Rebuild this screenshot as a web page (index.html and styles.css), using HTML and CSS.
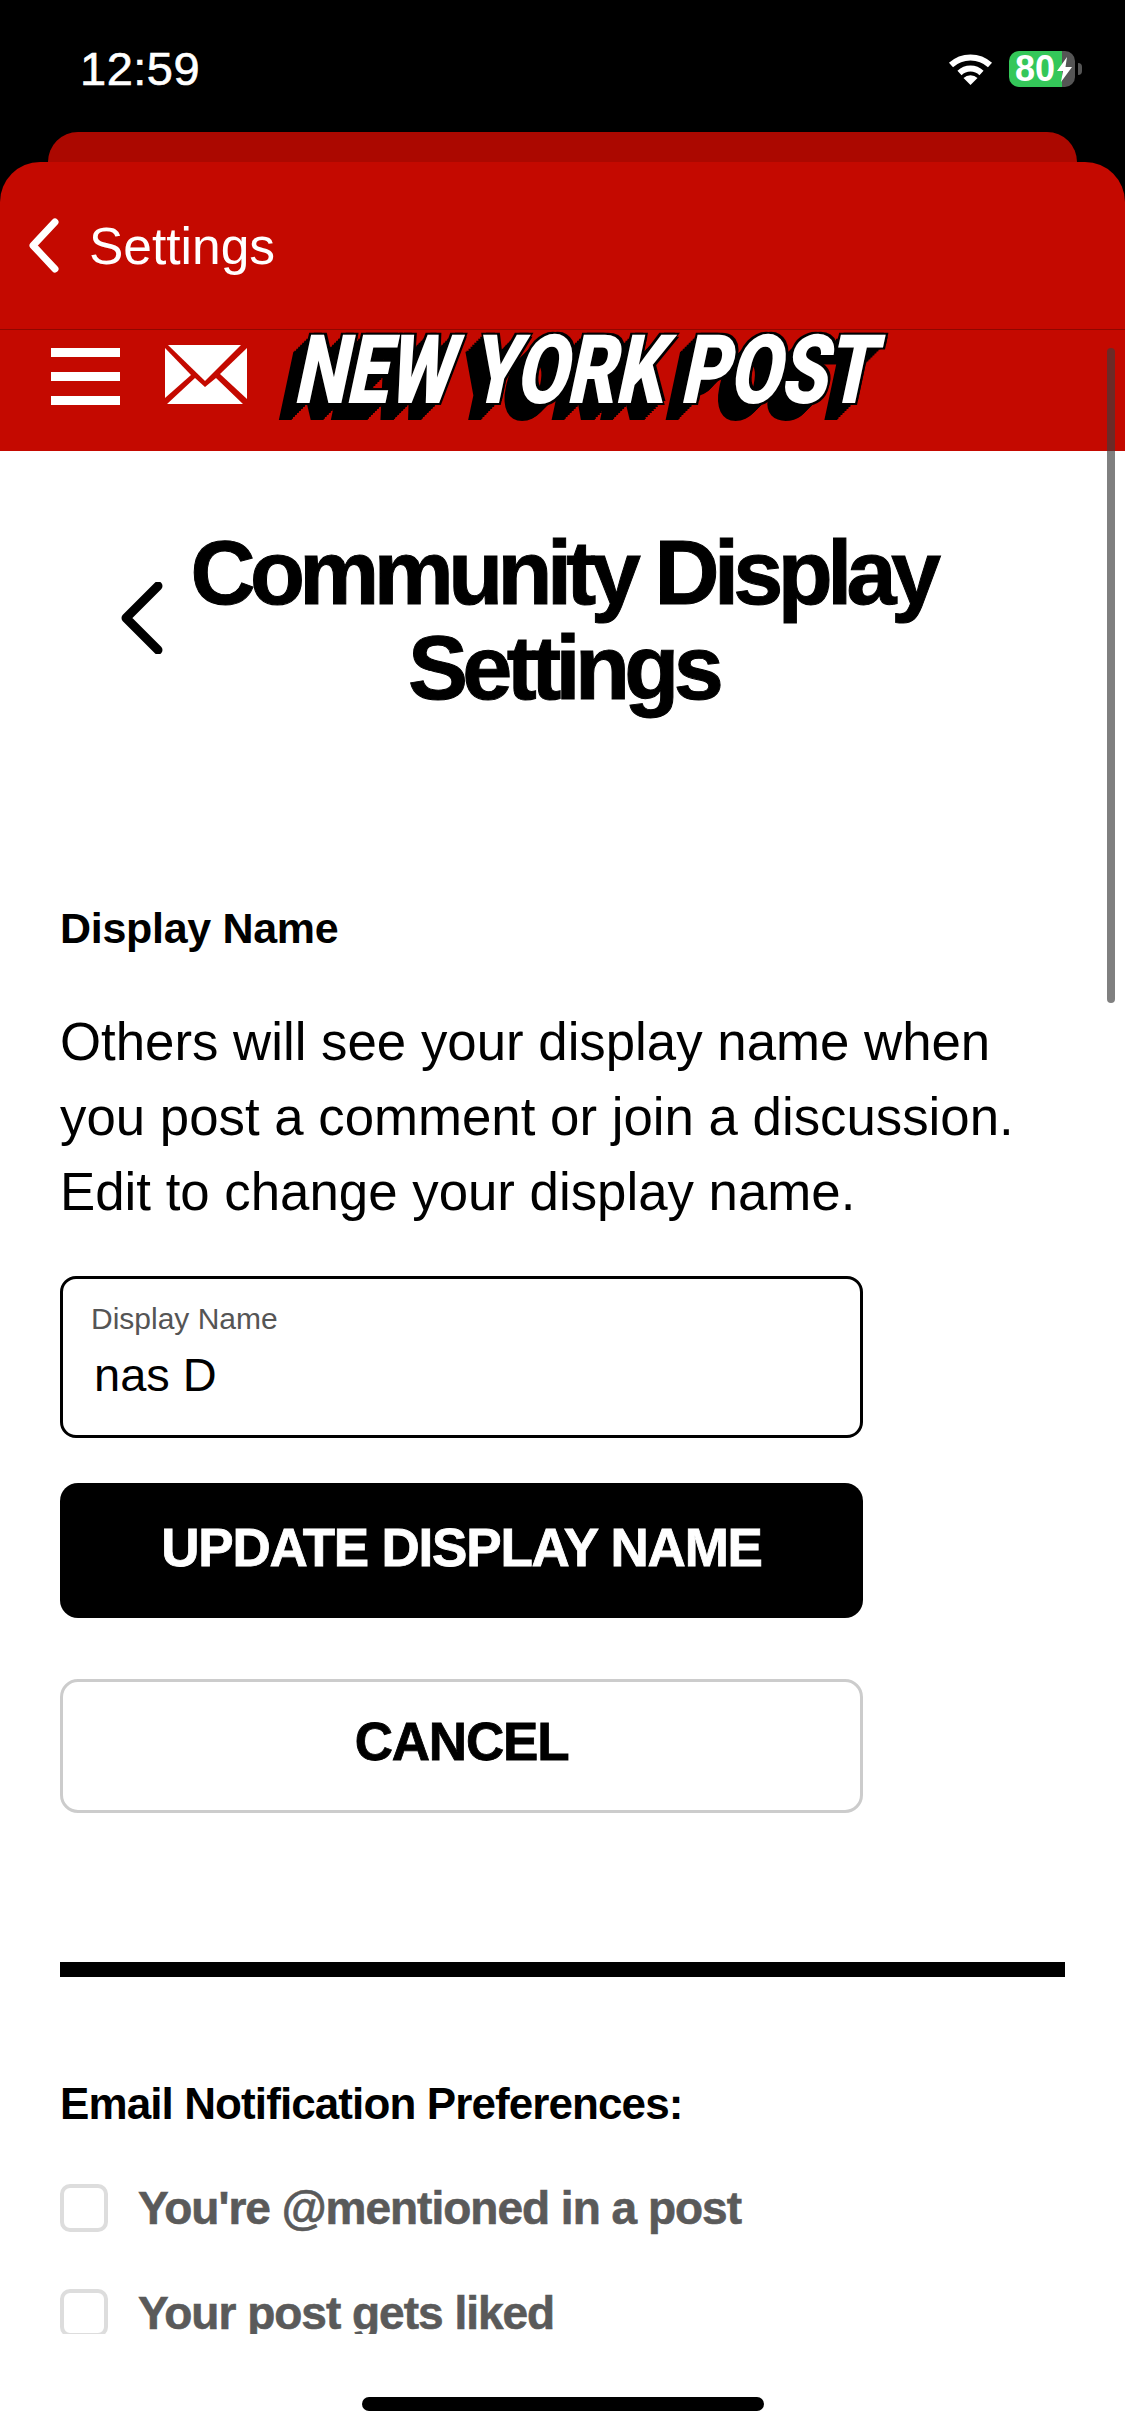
FILE: index.html
```html
<!DOCTYPE html>
<html lang="en">
<head>
    <meta charset="UTF-8">
    <meta name="viewport" content="width=device-width, initial-scale=1.0">
    <title>Community Display Settings</title>
    <link rel="stylesheet" href="styles.css">
</head>
<body>
    <div class="phone">
        <div class="status-bar">
            <span class="clock">12:59</span>
            <div class="status-icons">
                <svg class="wifi" viewBox="0 0 45 32">
                    <path d="M3 12 A29 29 0 0 1 42 12" fill="none" stroke="#fff" stroke-width="6"/>
                    <path d="M11.5 20 A16 16 0 0 1 33.5 20" fill="none" stroke="#fff" stroke-width="6"/>
                    <path d="M22.5 32 L15.5 25 A10 10 0 0 1 29.5 25 Z" fill="#fff"/>
                </svg>
                <div class="battery">
                    <span class="battery-level">80</span>
                    <svg class="bolt" viewBox="0 0 15 25">
                        <path d="M10 0 L0 14 H6 L4 25 L15 10 H8.5 Z" fill="#fff"/>
                    </svg>
                </div>
                <div class="battery-nub"></div>
            </div>
        </div>
        <div class="card-behind"></div>
        <div class="sheet">
            <div class="sheet-nav">
                <svg class="sheet-back" viewBox="0 0 32 55">
                    <path d="M27 4 L5 27.5 L27 51" fill="none" stroke="#fff" stroke-width="7" stroke-linecap="round" stroke-linejoin="round"/>
                </svg>
                <span>Settings</span>
            </div>
            <header class="site-header">
                <svg class="hamburger" viewBox="0 0 69 57">
                    <rect width="69" height="9" fill="#fff"/>
                    <rect y="24" width="69" height="9" fill="#fff"/>
                    <rect y="48" width="69" height="9" fill="#fff"/>
                </svg>
                <svg class="mail" viewBox="0 0 82 59">
                    <polygon points="3,0 76,0 40,36" fill="#fff"/>
                    <polygon points="0,3 26,30 0,53" fill="#fff"/>
                    <polygon points="82,3 55,29 82,54" fill="#fff"/>
                    <polygon points="30,33 40,42 51,33 78,59 2,59" fill="#fff"/>
                </svg>
                <div class="logo"><span>NEW YORK POST</span></div>
            </header>
            <main class="content">
                <div class="title-row">
                    <svg class="title-back" viewBox="0 0 42 72">
                        <path d="M37 4 L5 36 L37 68" fill="none" stroke="#000" stroke-width="9" stroke-linecap="round" stroke-linejoin="round"/>
                    </svg>
                    <h1>Community Display Settings</h1>
                </div>

                <h2 class="section-label">Display Name</h2>
                <p class="section-text">Others will see your display name when you post a comment or join a discussion. Edit to change your display name.</p>

                <div class="field">
                    <div class="field-label">Display Name</div>
                    <div class="field-value">nas D</div>
                </div>
                <button class="btn btn-primary">UPDATE DISPLAY NAME</button>
                <button class="btn btn-secondary">CANCEL</button>

                <hr class="divider">

                <h2 class="section-label email-label">Email Notification Preferences:</h2>
                <div class="pref">
                    <span class="checkbox"></span>
                    <span class="pref-text">You're @mentioned in a post</span>
                </div>
                <div class="pref">
                    <span class="checkbox"></span>
                    <span class="pref-text">Your post gets liked</span>
                </div>
            </main>
            <div class="bottom-bar"></div>
        </div>
        <div class="scrollbar"></div>
        <div class="home-indicator"></div>
    </div>
</body>
</html>
```

FILE: styles.css
```css
* {
    box-sizing: border-box;
}
body {
    font-family: 'Liberation Sans', Arial, sans-serif;
    margin: 0;
    padding: 0;
    background-color: #000;
}
.phone {
    position: relative;
    width: 1125px;
    height: 2436px;
    overflow: hidden;
    background-color: #000;
}

/* Barra de estado */
.status-bar {
    height: 132px;
    padding: 0 43px 0 80px;
    display: flex;
    justify-content: space-between;
    align-items: flex-start;
    color: white;
}
.clock {
    margin-top: 46px;
    font-size: 47px;
    line-height: 46px;
    letter-spacing: 0.5px;
    -webkit-text-stroke: 0.6px white;
}
.status-icons {
    display: flex;
    align-items: center;
    margin-top: 51px;
}
.wifi {
    width: 45px;
    height: 32px;
    margin-right: 16px;
}
.battery {
    width: 66px;
    height: 36px;
    border-radius: 10px;
    background: linear-gradient(to right, #34c759 53px, #555 53px);
    display: flex;
    align-items: center;
    padding-left: 6px;
}
.battery-level {
    width: 42px;
    font-size: 36px;
    line-height: 36px;
    font-weight: bold;
    color: white;
}
.bolt {
    width: 15px;
    height: 25px;
}
.battery-nub {
    width: 4px;
    height: 12px;
    margin-left: 3px;
    border-radius: 0 4px 4px 0;
    background-color: #555;
}

/* Tarjetas */
.card-behind {
    height: 30px;
    margin: 0 48px;
    border-radius: 32px 32px 0 0;
    background-color: #ab0800;
}
.sheet {
    height: 2274px;
    border-radius: 40px 40px 0 0;
    background-color: #c40900;
    display: flex;
    flex-direction: column;
}
.sheet-nav {
    height: 168px;
    flex: none;
    padding-left: 28px;
    display: flex;
    align-items: center;
    gap: 29px;
    color: white;
    font-size: 51.5px;
    border-bottom: 1px solid #8f0700;
}
.sheet-back {
    width: 32px;
    height: 55px;
}
.site-header {
    height: 121px;
    flex: none;
    padding: 18px 0 0 51px;
    display: flex;
    align-items: flex-start;
    gap: 45px;
}
.hamburger {
    width: 69px;
    height: 57px;
}
.mail {
    width: 82px;
    height: 59px;
    margin-top: -3px;
}
.logo {
    width: 530px;
    height: 70px;
    margin: -13px 0 0 -10px;
}
.logo span {
    display: block;
    width: 680px;
    font-family: Roboto, 'Liberation Sans', sans-serif;
    font-size: 96px;
    line-height: 70px;
    font-weight: 900;
    white-space: nowrap;
    color: white;
    letter-spacing: -1px;
    transform-origin: left bottom;
    transform: translateX(10px) skewX(-12deg) scaleX(0.785);
    text-shadow: -3px -2px #000, 3px -2px #000, 3px 2px #000, -3px 2px #000, -5px 4px #000, -7px 6px #000, -9px 8px #000, -11px 10px #000, -13px 12px #000, -15px 14px #000, -17px 16px #000, -18px 17px #000;
}

/* Contenido */
.content {
    height: 1883px;
    flex: none;
    padding: 0 60px;
    background-color: white;
    overflow: hidden;
}
.title-row {
    display: flex;
    align-items: center;
    margin: 75px 0 0 61px;
}
.title-back {
    width: 42px;
    height: 72px;
    flex: none;
    margin-top: -6px;
}
h1 {
    width: 774px;
    margin: 0 0 0 13px;
    font-size: 90px;
    line-height: 95px;
    font-weight: bold;
    text-align: center;
    letter-spacing: -5.6px;
    color: black;
    -webkit-text-stroke: 1px black;
}
.section-label {
    margin: 0;
    font-size: 43px;
    line-height: 50px;
    font-weight: bold;
    letter-spacing: -0.3px;
    color: black;
}
.title-row + .section-label {
    margin-top: 187px;
}
.section-text {
    margin: 51px 0 0;
    max-width: 1005px;
    font-size: 52.8px;
    line-height: 75px;
    color: black;
}
.field {
    width: 803px;
    height: 162px;
    margin-top: 47px;
    padding: 22px 28px;
    border: 3px solid #000;
    border-radius: 16px;
}
.field-label {
    font-size: 30px;
    line-height: 36px;
    color: #555;
}
.field-value {
    margin: 10px 0 0 3px;
    font-size: 47px;
    line-height: 56px;
    color: black;
}
.btn {
    display: block;
    width: 803px;
    font-family: inherit;
    font-size: 53px;
    font-weight: bold;
    letter-spacing: -1.2px;
    text-align: center;
    -webkit-text-stroke: 0.8px currentColor;
}
.btn-primary {
    height: 135px;
    margin-top: 45px;
    padding: 0 0 6px;
    border: none;
    border-radius: 18px;
    background-color: #000;
    color: white;
}
.btn-secondary {
    height: 134px;
    margin-top: 61px;
    padding: 0 0 10px;
    border: 3px solid #ccc;
    border-radius: 18px;
    background-color: white;
    color: black;
}
.divider {
    width: 1005px;
    height: 15px;
    margin: 149px 0 0;
    border: none;
    background-color: #000;
}
.email-label {
    margin-top: 102px;
    font-size: 44px;
    letter-spacing: -0.9px;
}
.email-label + .pref {
    margin-top: 55px;
}
.pref {
    display: flex;
    align-items: center;
    gap: 30px;
    height: 48px;
    margin-top: 57px;
}
.checkbox {
    width: 48px;
    height: 48px;
    flex: none;
    border: 4px solid #ddd;
    border-radius: 10px;
}
.pref-text {
    font-size: 46px;
    font-weight: bold;
    letter-spacing: -1px;
    color: #5a5a5a;
    -webkit-text-stroke: 0.6px #5a5a5a;
}
.bottom-bar {
    flex: 1;
    background-color: white;
}

/* Elementos superpuestos */
.scrollbar {
    position: absolute;
    top: 348px;
    left: 1107px;
    width: 8px;
    height: 655px;
    border-radius: 4px;
    background-color: rgba(60, 60, 60, 0.65);
}
.home-indicator {
    position: absolute;
    top: 2397px;
    left: 362px;
    width: 402px;
    height: 14px;
    border-radius: 7px;
    background-color: #000;
}
```
